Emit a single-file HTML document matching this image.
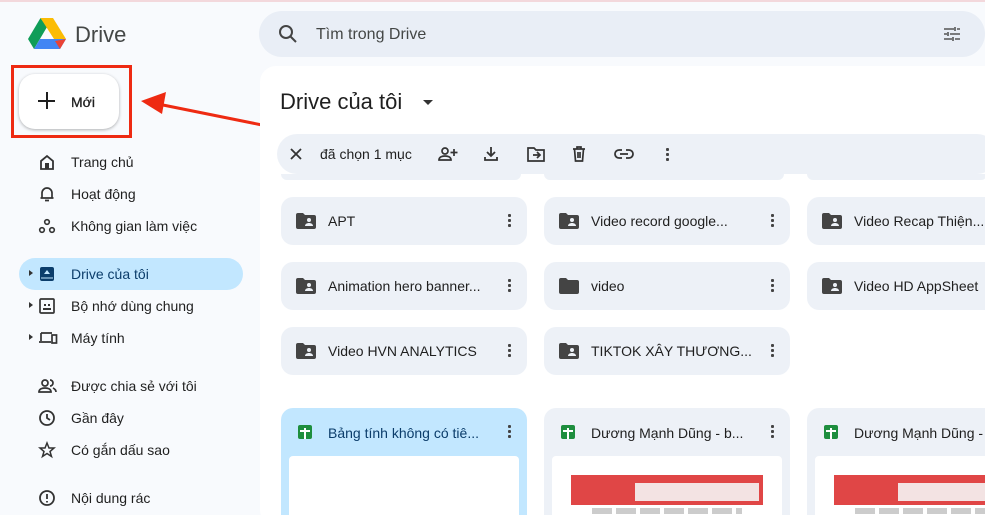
<!DOCTYPE html><html><head><meta charset="utf-8"><style>
*{box-sizing:border-box;margin:0;padding:0}
html,body{width:985px;height:515px;overflow:hidden}
body{background:#f8fafd;font-family:"Liberation Sans","Noto Sans CJK SC",sans-serif;color:#1f1f1f;position:relative}
.a{position:absolute}
.nav{position:absolute;left:38px;font-size:14px;color:#1f1f1f;height:18px}
.nav svg{position:absolute;left:0;top:0}
.nav span{position:absolute;left:33px;top:1px;white-space:nowrap}
.card{position:absolute;width:246px;height:48px;background:#edf1f7;border-radius:12px;font-size:14px}
.card .t{position:absolute;left:47px;top:16px;white-space:nowrap}
.card .f{position:absolute;left:15px;top:16px}
.dots{position:absolute;right:16px;top:16px;width:3px;height:15px;background:radial-gradient(circle,#444 1.5px,transparent 1.6px) 0 0/3px 5px repeat-y}
.fc{position:absolute;top:408px;width:246px;height:120px;background:#edf1f7;border-radius:12px}
.fc .t{position:absolute;left:47px;top:17px;font-size:14px;white-space:nowrap}
.fc .ic{position:absolute;left:17px;top:17px;width:14px;height:14px;background:#1e8e3e;border-radius:2px}
.fc .ic:before{content:"";position:absolute;left:6px;top:3px;width:2px;height:11px;background:#fff}
.fc .ic:after{content:"";position:absolute;left:2px;top:5px;width:10px;height:2px;background:#fff}
.fc .pv{position:absolute;left:8px;right:8px;top:48px;height:72px;background:#fff;border-radius:4px;overflow:hidden}
.red{position:absolute;left:19px;top:19px;width:192px;height:30px;background:#e04646}
.red:after{content:"";position:absolute;left:64px;top:8px;width:124px;height:18px;background:#f3e3e3}
.lines{position:absolute;left:40px;top:52px;width:150px;height:6px;background:repeating-linear-gradient(90deg,#ccc 0 20px,transparent 20px 24px)}
</style></head><body>
<div class="a" style="left:0;top:0;width:985px;height:2px;background:#f3d8dc"></div>
<svg class="a" style="left:28px;top:17px" width="38" height="33" viewBox="0 0 38 33">
<path d="M12.5 1 L0 22 L6 32 L19 10z" fill="#0f9d58"/>
<path d="M12.5 1 H25 L38 22 H26z" fill="#fbbc04"/>
<path d="M38 22 L32 32 H6 L12 22z" fill="#4285f4"/>
<path d="M38 22 L32 32 L27 24z" fill="#ea4335"/>
</svg>
<div class="a" style="left:75px;top:22px;font-size:22px;color:#444746">Drive</div>
<div class="a" style="left:259px;top:11px;width:726px;height:46px;background:#e9eef6;border-radius:24px"></div>
<svg class="a" style="left:278px;top:24px" width="20" height="20" viewBox="0 0 20 20"><circle cx="8" cy="8" r="6" fill="none" stroke="#444" stroke-width="2"/><path d="M12.5 12.5L18 18" stroke="#444" stroke-width="2"/></svg>
<div class="a" style="left:316px;top:26px;font-size:16px;color:#444746">Tìm trong Drive</div>
<svg class="a" style="left:942px;top:24px" width="20" height="20" viewBox="0 0 20 20" stroke="#555" stroke-width="1.6"><path d="M2 5h10M15 5h3M2 10h3M8 10h10M2 15h8M13 15h5M13 3v4M6 8v4M11 13v4"/></svg>
<div class="a" style="left:19px;top:74px;width:100px;height:55px;background:#fff;border-radius:16px;box-shadow:0 1px 3px rgba(0,0,0,.3)"></div>
<div class="a" style="left:38px;top:100px;width:17px;height:2px;background:#1f1f1f"></div>
<div class="a" style="left:46px;top:92px;width:2px;height:17px;background:#1f1f1f"></div>
<div class="a" style="left:71px;top:94px;font-size:14px;color:#1f1f1f;-webkit-text-stroke:0.3px #1f1f1f">Mới</div>
<div class="a" style="left:11px;top:65px;width:121px;height:73px;border:3px solid #ee2a12"></div>
<svg class="a" style="left:138px;top:92px" width="130" height="40"><path d="M124 33 L20 12" stroke="#ee2a12" stroke-width="3"/><path d="M3 9 L28 0 L24 22z" fill="#ee2a12"/></svg>
<div class="nav" style="top:153px"><svg width="18" height="18" viewBox="0 0 18 18"><path d="M3 8l6-5 6 5v8H3z" fill="none" stroke="#333" stroke-width="1.8"/><rect x="7" y="10" width="4" height="6" fill="#333"/></svg><span>Trang chủ</span></div>
<div class="nav" style="top:185px"><svg width="18" height="18" viewBox="0 0 18 18"><path d="M4 13V8a5 5 0 0110 0v5h1.5H2.5z M7 15.5h4" fill="none" stroke="#333" stroke-width="1.7"/></svg><span>Hoạt động</span></div>
<div class="nav" style="top:217px"><svg width="18" height="18" viewBox="0 0 18 18" fill="none" stroke="#333" stroke-width="1.6"><circle cx="9" cy="5" r="2.3"/><circle cx="4" cy="13" r="2.3"/><circle cx="14" cy="13" r="2.3"/></svg><span>Không gian làm việc</span></div>
<div class="a" style="left:19px;top:258px;width:224px;height:32px;background:#c2e7ff;border-radius:16px"></div>
<div class="nav" style="top:265px"><svg width="18" height="18" viewBox="0 0 18 18"><rect x="2" y="2" width="14" height="14" rx="2" fill="#0b3d6b"/><path d="M6 9l3-4 3 4z" fill="#c2e7ff"/><path d="M3 13h12" stroke="#c2e7ff" stroke-width="1"/></svg><span style="color:#0b3d6b">Drive của tôi</span></div>
<div class="nav" style="top:297px"><svg width="18" height="18" viewBox="0 0 18 18"><rect x="2" y="2" width="14" height="14" rx="1" fill="none" stroke="#333" stroke-width="1.7"/><path d="M5 12h8M6 8h2M10 8h2" stroke="#333" stroke-width="2"/></svg><span>Bộ nhớ dùng chung</span></div>
<div class="nav" style="top:329px"><svg width="20" height="18" viewBox="0 0 20 18" fill="none" stroke="#333" stroke-width="1.7"><path d="M3 4h11M3 4v8M1 13h12"/><rect x="14" y="6" width="4.5" height="8"/></svg><span>Máy tính</span></div>
<div class="a" style="left:29px;top:270px;border-left:4px solid #333;border-top:3.5px solid transparent;border-bottom:3.5px solid transparent"></div>
<div class="a" style="left:29px;top:302px;border-left:4px solid #333;border-top:3.5px solid transparent;border-bottom:3.5px solid transparent"></div>
<div class="a" style="left:29px;top:334px;border-left:4px solid #333;border-top:3.5px solid transparent;border-bottom:3.5px solid transparent"></div>
<div class="nav" style="top:377px"><svg width="20" height="18" viewBox="0 0 20 18" fill="none" stroke="#333" stroke-width="1.7"><circle cx="7" cy="6" r="3"/><path d="M1 15c0-3 3-4 6-4s6 1 6 4z"/><path d="M12 3a3 3 0 010 6M15 11c2 1 3 2 3 4"/></svg><span>Được chia sẻ với tôi</span></div>
<div class="nav" style="top:409px"><svg width="18" height="18" viewBox="0 0 18 18" fill="none" stroke="#333" stroke-width="1.8"><circle cx="9" cy="9" r="7"/><path d="M9 5v4l3 2"/></svg><span>Gần đây</span></div>
<div class="nav" style="top:441px"><svg width="18" height="18" viewBox="0 0 18 18" fill="none" stroke="#333" stroke-width="1.5"><path d="M9 2l2 5h5l-4 3.5 1.5 5L9 12.5 4.5 15.5 6 10.5 2 7h5z"/></svg><span>Có gắn dấu sao</span></div>
<div class="nav" style="top:489px"><svg width="18" height="18" viewBox="0 0 18 18" fill="none" stroke="#333" stroke-width="1.8"><circle cx="9" cy="9" r="7"/><path d="M9 5v5M9 12v1.5"/></svg><span>Nội dung rác</span></div>
<div class="a" style="left:260px;top:66px;width:740px;height:460px;background:#fff;border-radius:16px"></div>
<div class="a" style="left:280px;top:89px;font-size:22px;color:#1f1f1f">Drive của tôi</div>
<div class="a" style="left:423px;top:100px;border-top:5px solid #333;border-left:5px solid transparent;border-right:5px solid transparent"></div>
<div class="a" style="left:277px;top:134px;width:720px;height:40px;background:#edf1f7;border-radius:20px"></div>
<svg class="a" style="left:289px;top:147px" width="14" height="14" stroke="#333" stroke-width="1.8"><path d="M2 2l10 10M12 2L2 12"/></svg>
<div class="a" style="left:320px;top:146px;font-size:14px">đã chọn 1 mục</div>
<svg class="a" style="left:437px;top:145px" width="22" height="18" fill="none" stroke="#333" stroke-width="1.7"><circle cx="8" cy="6" r="3"/><path d="M2 15c0-3 3-4 6-4s6 1 6 4z M17 4v7M13.5 7.5h7"/></svg>
<svg class="a" style="left:483px;top:145px" width="16" height="18" fill="none" stroke="#333" stroke-width="1.8"><path d="M8 2v9M4 7l4 4 4-4M2 12v3h12v-3"/></svg>
<svg class="a" style="left:526px;top:145px" width="20" height="18" fill="none" stroke="#333" stroke-width="1.7"><path d="M2 3h6l2 2h8v11H2z M7 10h7M11 7l3 3-3 3"/></svg>
<svg class="a" style="left:571px;top:145px" width="16" height="18" fill="none" stroke="#333" stroke-width="1.7"><path d="M2 4h12M6 4V2h4v2M3.5 4l1 12h7l1-12M7 7v6M9 7v6"/></svg>
<svg class="a" style="left:613px;top:147px" width="22" height="14" fill="none" stroke="#333" stroke-width="1.8"><path d="M9 3H6a4 4 0 000 8h3M13 3h3a4 4 0 010 8h-3M7 7h8"/></svg>
<div class="dots" style="left:666px;top:147px"></div>
<div class="a" style="left:281px;top:174px;width:240px;height:6px;background:#edf1f7;border-radius:0 0 8px 8px"></div>
<div class="a" style="left:544px;top:174px;width:240px;height:6px;background:#edf1f7;border-radius:0 0 8px 8px"></div>
<div class="a" style="left:807px;top:174px;width:180px;height:6px;background:#edf1f7;border-radius:0 0 8px 8px"></div>
<div class="card" style="left:281px;top:197px"><svg class="f" width="20" height="16"><path d="M0 2a2 2 0 012-2h5l2 2h9a2 2 0 012 2v10a2 2 0 01-2 2H2a2 2 0 01-2-2z" fill="#444"/><circle cx="13" cy="7" r="2" fill="#edf1f7"/><path d="M9 13c0-2 2-3 4-3s4 1 4 3z" fill="#edf1f7"/></svg><span class="t">APT</span><i class="dots"></i></div>
<div class="card" style="left:544px;top:197px"><svg class="f" width="20" height="16"><path d="M0 2a2 2 0 012-2h5l2 2h9a2 2 0 012 2v10a2 2 0 01-2 2H2a2 2 0 01-2-2z" fill="#444"/><circle cx="13" cy="7" r="2" fill="#edf1f7"/><path d="M9 13c0-2 2-3 4-3s4 1 4 3z" fill="#edf1f7"/></svg><span class="t">Video record google...</span><i class="dots"></i></div>
<div class="card" style="left:807px;top:197px"><svg class="f" width="20" height="16"><path d="M0 2a2 2 0 012-2h5l2 2h9a2 2 0 012 2v10a2 2 0 01-2 2H2a2 2 0 01-2-2z" fill="#444"/><circle cx="13" cy="7" r="2" fill="#edf1f7"/><path d="M9 13c0-2 2-3 4-3s4 1 4 3z" fill="#edf1f7"/></svg><span class="t">Video Recap Thiện...</span><i class="dots"></i></div>
<div class="card" style="left:281px;top:262px"><svg class="f" width="20" height="16"><path d="M0 2a2 2 0 012-2h5l2 2h9a2 2 0 012 2v10a2 2 0 01-2 2H2a2 2 0 01-2-2z" fill="#444"/><circle cx="13" cy="7" r="2" fill="#edf1f7"/><path d="M9 13c0-2 2-3 4-3s4 1 4 3z" fill="#edf1f7"/></svg><span class="t">Animation hero banner...</span><i class="dots"></i></div>
<div class="card" style="left:544px;top:262px"><svg class="f" width="20" height="16"><path d="M0 2a2 2 0 012-2h5l2 2h9a2 2 0 012 2v10a2 2 0 01-2 2H2a2 2 0 01-2-2z" fill="#444"/></svg><span class="t">video</span><i class="dots"></i></div>
<div class="card" style="left:807px;top:262px"><svg class="f" width="20" height="16"><path d="M0 2a2 2 0 012-2h5l2 2h9a2 2 0 012 2v10a2 2 0 01-2 2H2a2 2 0 01-2-2z" fill="#444"/><circle cx="13" cy="7" r="2" fill="#edf1f7"/><path d="M9 13c0-2 2-3 4-3s4 1 4 3z" fill="#edf1f7"/></svg><span class="t">Video HD AppSheet</span><i class="dots"></i></div>
<div class="card" style="left:281px;top:327px"><svg class="f" width="20" height="16"><path d="M0 2a2 2 0 012-2h5l2 2h9a2 2 0 012 2v10a2 2 0 01-2 2H2a2 2 0 01-2-2z" fill="#444"/><circle cx="13" cy="7" r="2" fill="#edf1f7"/><path d="M9 13c0-2 2-3 4-3s4 1 4 3z" fill="#edf1f7"/></svg><span class="t">Video HVN ANALYTICS</span><i class="dots"></i></div>
<div class="card" style="left:544px;top:327px"><svg class="f" width="20" height="16"><path d="M0 2a2 2 0 012-2h5l2 2h9a2 2 0 012 2v10a2 2 0 01-2 2H2a2 2 0 01-2-2z" fill="#444"/><circle cx="13" cy="7" r="2" fill="#edf1f7"/><path d="M9 13c0-2 2-3 4-3s4 1 4 3z" fill="#edf1f7"/></svg><span class="t">TIKTOK XÂY THƯƠNG...</span><i class="dots"></i></div>
<div class="fc" style="left:281px;background:#c2e7ff"><i class="ic"></i><span class="t" style="color:#0b3d6b">Bảng tính không có tiê...</span><i class="dots"></i><div class="pv"></div></div>
<div class="fc" style="left:544px"><i class="ic"></i><span class="t">Dương Mạnh Dũng - b...</span><i class="dots"></i><div class="pv"><div class="red"></div><div class="lines"></div></div></div>
<div class="fc" style="left:807px"><i class="ic"></i><span class="t">Dương Mạnh Dũng -</span><div class="pv"><div class="red"></div><div class="lines"></div></div></div>
</body></html>
